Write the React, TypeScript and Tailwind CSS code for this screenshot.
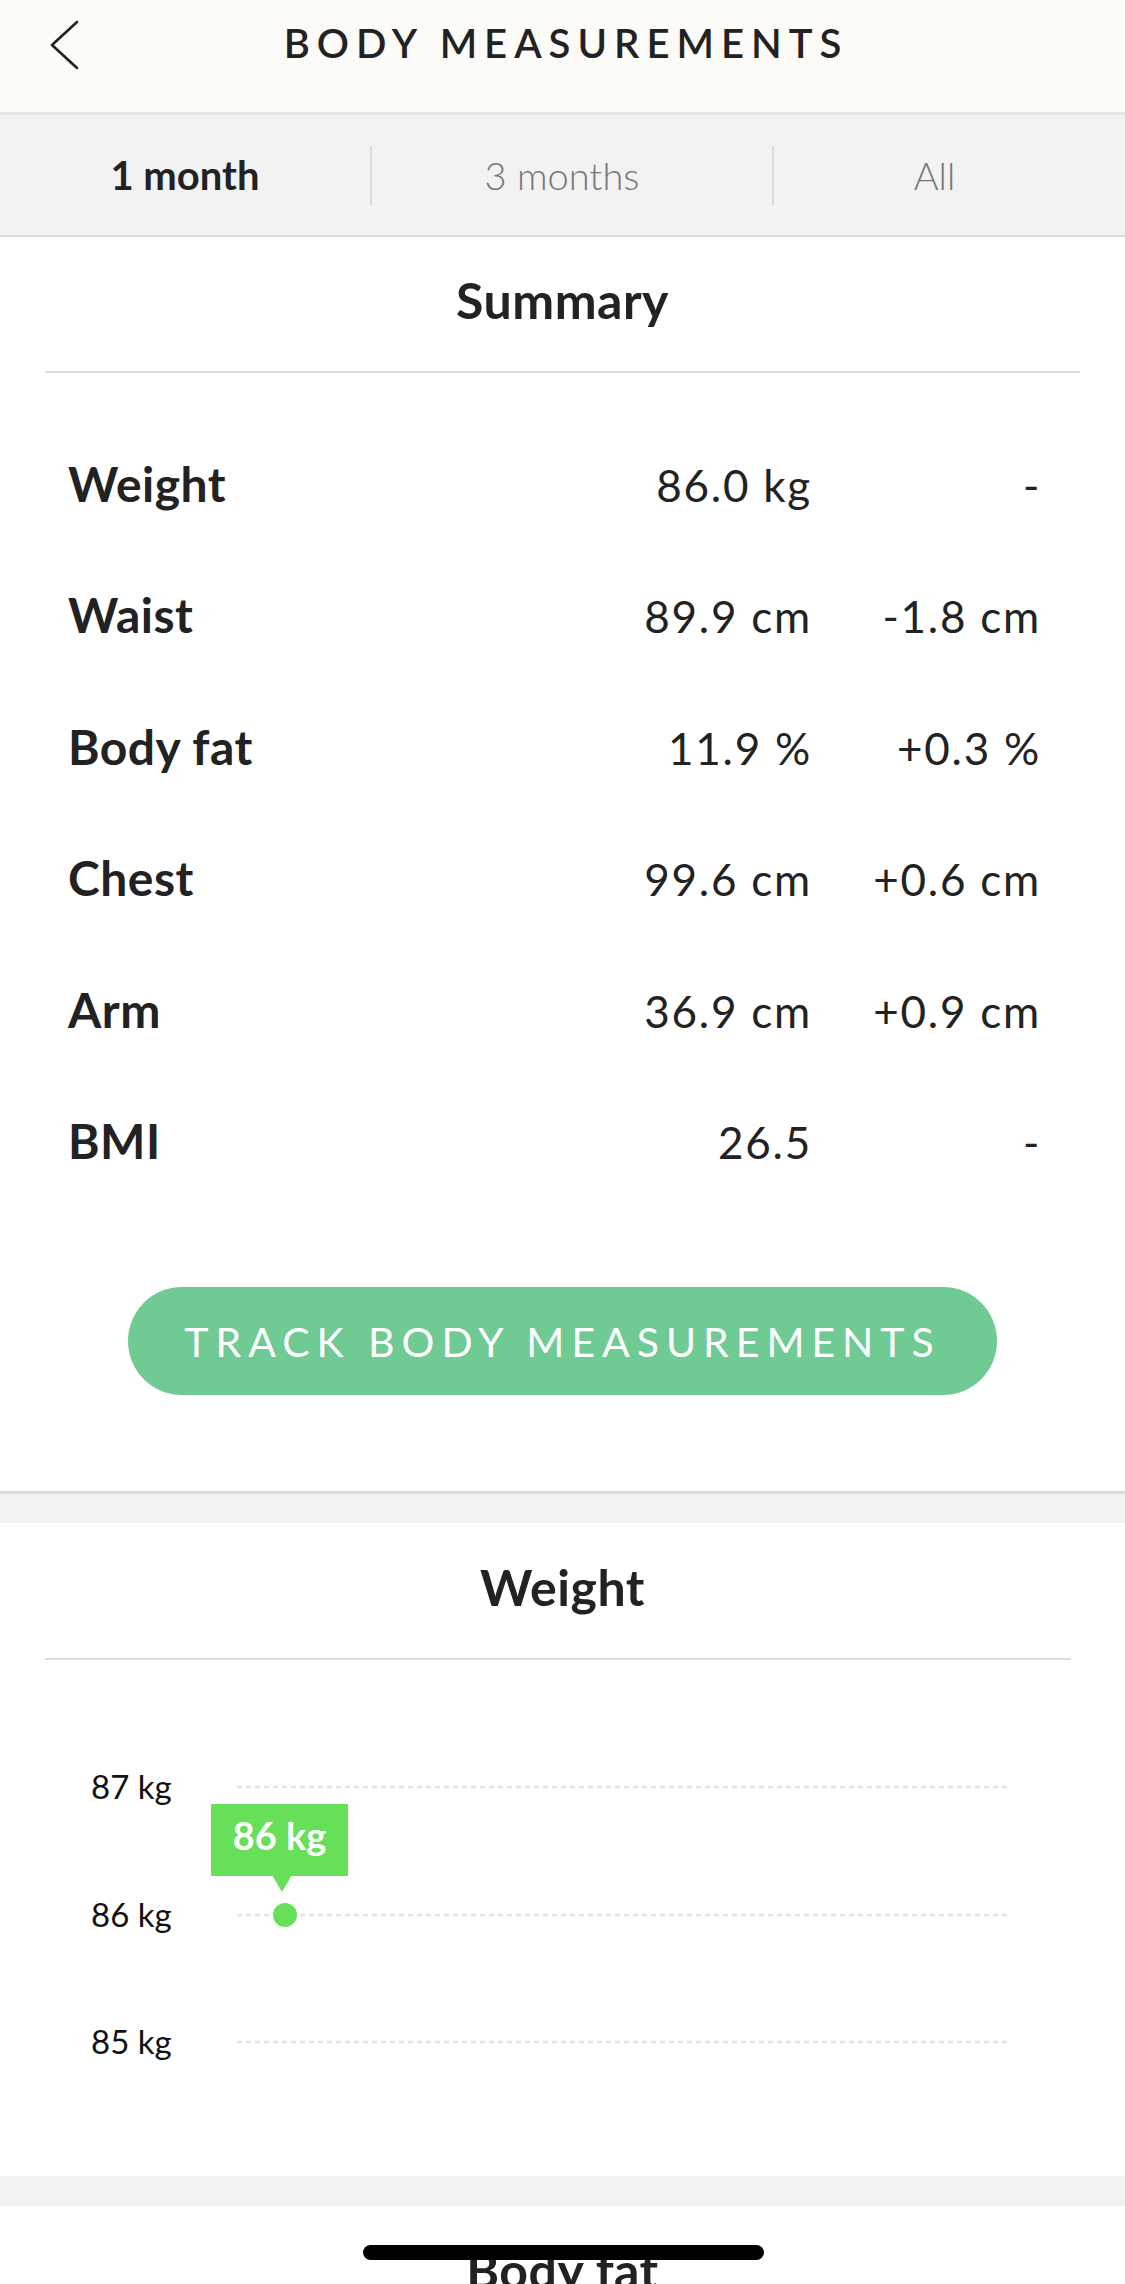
const rows = [
    { label: 'Weight', value: '86.0 kg', delta: '-' },
    { label: 'Waist', value: '89.9 cm', delta: '-1.8 cm' },
    { label: 'Body fat', value: '11.9 %', delta: '+0.3 %' },
    { label: 'Chest', value: '99.6 cm', delta: '+0.6 cm' },
    { label: 'Arm', value: '36.9 cm', delta: '+0.9 cm' },
    { label: 'BMI', value: '26.5', delta: '-' },
];

// y of each gridline inside the chart box
const gridLines = [
    { label: '87 kg', y: 127 },
    { label: '86 kg', y: 255 },
    { label: '85 kg', y: 382 },
];

export default function App() {
    return (
        <div className="relative w-[1125px] h-[2284px] overflow-hidden bg-[#f2f2f2] text-[#222] font-['Lato','Noto_Sans',sans-serif]">
            {/* Header */}
            <header className="relative h-[115px] bg-[#fcfbf8] border-b-[3px] border-[#e8e4e0]">
                <button className="absolute left-[49px] top-[20px]">
                    <svg width="30" height="50" viewBox="0 0 30 50" fill="none">
                        <polyline points="28,2 3,25 28,48" stroke="#222" strokeWidth="2.6" strokeLinecap="round" strokeLinejoin="round" />
                    </svg>
                </button>
                <h1 className="pt-[23px] pl-[7px] text-center text-[40px] leading-[40px] font-semibold tracking-[0.175em]">
                    BODY MEASUREMENTS
                </h1>
            </header>

            {/* Range tabs */}
            <div className="flex h-[122px] items-center bg-[#f2f2f2] border-b-2 border-[#dcdcdc] text-[40px] leading-[40px]">
                <div className="w-[370px] text-center font-bold text-[#222]">1 month</div>
                <div className="w-[2px] h-[59px] bg-[#d8d8d8]" />
                <div className="w-[400px] pr-[20px] text-center text-[38px] font-light text-[#767676]">3 months</div>
                <div className="w-[2px] h-[59px] bg-[#d8d8d8]" />
                <div className="flex-1 pr-[30px] text-center text-[38px] font-light text-[#767676]">All</div>
            </div>

            {/* Summary */}
            <section className="bg-white border-b-[3px] border-[#dcdcdc]">
                <h2 className="pt-[38px] pb-[46px] text-center text-[50px] leading-[50px] font-bold tracking-[0.01em]">Summary</h2>
                <div className="mx-[45px] h-[2px] bg-[#dcdcdc]" />

                <div className="mt-[45px]">
                    {rows.map((row) => (
                        <div key={row.label} className="flex items-baseline h-[131.4px] leading-[131.4px] pl-[68px] pr-[84px]">
                            <span className="flex-1 text-[48px] font-bold tracking-[0.01em]">{row.label}</span>
                            <span className="text-right text-[44px] tracking-[0.04em]">{row.value}</span>
                            <span className="w-[229px] text-right text-[44px] tracking-[0.04em]">{row.delta}</span>
                        </div>
                    ))}
                </div>

                <div className="pt-[81px] pb-[96px]">
                    <button className="mx-auto flex h-[108px] w-[869px] items-center justify-center rounded-full bg-[#6fca94] text-[41px] leading-[41px] tracking-[0.17em] text-white">
                        TRACK BODY MEASUREMENTS
                    </button>
                </div>
            </section>

            {/* Weight chart */}
            <section className="mt-[29px] bg-white">
                <h2 className="pt-[39px] pb-[46px] text-center text-[50px] leading-[50px] font-bold tracking-[0.01em]">Weight</h2>
                <div className="ml-[45px] mr-[54px] h-[2px] bg-[#dcdcdc]" />

                <div className="relative h-[516px]">
                    <svg className="absolute inset-0" width="1125" height="516">
                        {gridLines.map((g) => (
                            <line key={g.y} x1="237" x2="1011" y1={g.y} y2={g.y} stroke="#e6e3df" strokeWidth="2.5" strokeDasharray="5 4" />
                        ))}
                        <polygon points="272,215 292,215 282,232" fill="#68df59" />
                        <circle cx="285" cy="255" r="12" fill="#68df59" />
                    </svg>

                    {gridLines.map((g) => (
                        <span key={g.label} className="absolute left-[91px] text-[33px] leading-[33px] text-[#111]" style={{ top: g.y - 17 }}>
                            {g.label}
                        </span>
                    ))}

                    <div className="absolute left-[211px] top-[144px] flex h-[72px] w-[137px] items-center justify-center bg-[#68df59] pb-[10px] text-[38px] leading-[38px] font-bold text-white">
                        86 kg
                    </div>
                </div>
            </section>

            {/* Next card, cut off by the screen edge */}
            <section className="mt-[30px] bg-white h-[200px]">
                <h2 className="pt-[39px] text-center text-[50px] leading-[50px] font-bold tracking-[0.01em]">Body fat</h2>
            </section>

            {/* Home indicator */}
            <div className="absolute left-[363px] top-[2245px] h-[15px] w-[401px] rounded-full bg-black" />
        </div>
    );
}
